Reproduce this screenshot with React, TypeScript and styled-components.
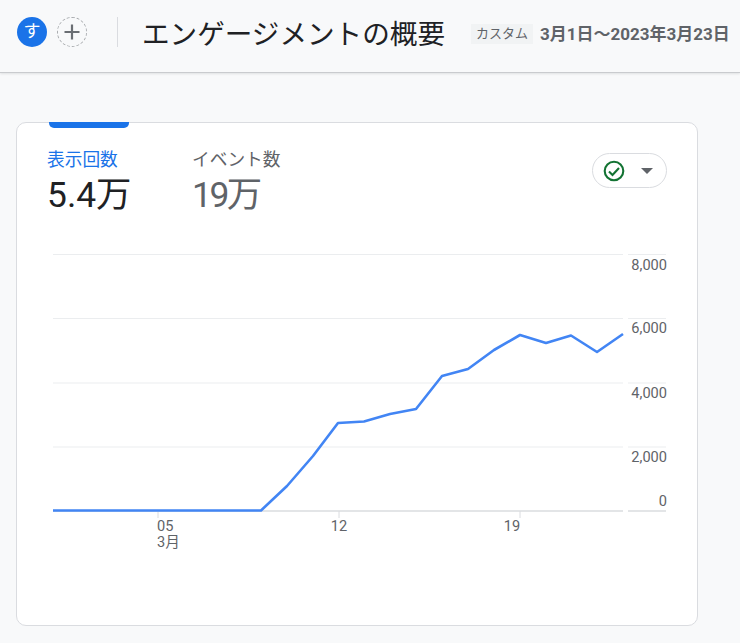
import styled, { createGlobalStyle } from "styled-components";

const FONT = `Roboto, "Noto Sans CJK JP", sans-serif`;

const Global = createGlobalStyle`
  html, body { margin: 0; padding: 0; background: #f8f9fa; overflow: hidden; }
  body { font-family: ${FONT}; }
`;

const Page = styled.div`
  width: 740px;
  height: 643px;
  overflow: hidden;
  background: #f8f9fa;
`;

const Header = styled.header`
  box-sizing: border-box;
  height: 73px;
  display: flex;
  align-items: center;
  padding: 0 0 8px 17px;
  border-bottom: 1px solid #c9cbce;
  box-shadow: 0 1px 2px rgba(60, 64, 67, 0.12);
  white-space: nowrap;
`;

const Avatar = styled.div`
  width: 30px;
  height: 30px;
  border-radius: 50%;
  background: #1a73e8;
  color: #fff;
  font-size: 17px;
  line-height: 28px;
  text-align: center;
`;

const AddButton = styled.div`
  box-sizing: border-box;
  width: 30px;
  height: 30px;
  margin-left: 10px;
  border-radius: 50%;
  border: 1px dashed #a8abae;
  display: flex;
  align-items: center;
  justify-content: center;
`;

const Divider = styled.div`
  width: 1px;
  height: 30px;
  margin: 0 24px 0 30px;
  background: #dadce0;
`;

const Title = styled.h1`
  margin: 0;
  font-size: 27.6px;
  font-weight: 400;
  color: #202124;
`;

const Chip = styled.span`
  margin: 3px 0 0 26px;
  padding: 0 5px;
  height: 20px;
  line-height: 20px;
  font-size: 13px;
  background: #f1f3f4;
  color: #5f6368;
`;

const DateRange = styled.span`
  margin: 1px 0 0 7px;
  font-size: 17px;
  font-weight: 700;
  color: #5f6368;
`;

const Card = styled.section`
  box-sizing: border-box;
  position: relative;
  width: 682px;
  height: 504px;
  margin: 49px 0 0 16px;
  background: #fff;
  border: 1px solid #dadce0;
  border-radius: 10px;
`;

const ActiveTabBar = styled.div`
  position: absolute;
  top: -1px;
  left: 32px;
  width: 80px;
  height: 6px;
  background: #1a73e8;
  border-radius: 0 0 5px 5px;
`;

const CardTop = styled.div`
  display: flex;
  align-items: flex-start;
  padding: 24px 30px 0 30px;
`;

const Metric = styled.div`
  width: 145px;
`;

const MetricLabel = styled.div<{ $active?: boolean }>`
  font-size: 17.7px;
  line-height: 26px;
  color: ${({ $active }) => ($active ? "#1a73e8" : "#5f6368")};
`;

const MetricValue = styled.div<{ $active?: boolean }>`
  font-size: 35.4px;
  line-height: 44px;
  letter-spacing: ${({ $active }) => ($active ? "0" : "-2.5px")};
  color: ${({ $active }) => ($active ? "#202124" : "#5f6368")};
`;

const CompareButton = styled.div`
  box-sizing: border-box;
  width: 75px;
  height: 35px;
  margin: 6px 0 0 auto;
  display: flex;
  align-items: center;
  padding-left: 10px;
  gap: 16px;
  border: 1px solid #dadce0;
  border-radius: 18px;
`;

const Caret = styled.div`
  width: 0;
  height: 0;
  border-left: 6px solid transparent;
  border-right: 6px solid transparent;
  border-top: 6px solid #5f6368;
`;

const Chart = styled.svg`
  display: block;
  margin-top: 23px;
  font-family: ${FONT};
  font-size: 14.6px;
  fill: #5f6368;
`;

// chart svg starts at page (17, 240)
const OX = 17;
const OY = 240;
const series: [number, number][] = [
  [53, 510.5], [261, 510.5], [287, 486], [313, 456], [338, 423], [364, 421.5],
  [390, 414], [416, 409], [442, 376], [468, 369], [494, 350], [520, 335],
  [546, 343], [571, 335.5], [597, 352], [623, 334],
];
const linePoints = series.map(([x, y]) => `${x - OX},${y - OY}`).join(" ");
const gridLines = [254.5, 318.5, 383, 447];
const yLabels: [string, number][] = [["8,000", 270], ["6,000", 333], ["4,000", 398], ["2,000", 462], ["0", 506]];
const ticks = [158, 339, 520];

export default function App() {
  return (
    <Page>
      <Global />
      <Header>
        <Avatar>す</Avatar>
        <AddButton>
          <svg width="18" height="18" viewBox="0 0 18 18">
            <path d="M9 1.5v15M1.5 9h15" stroke="#6a6e73" strokeWidth="2.2" fill="none" />
          </svg>
        </AddButton>
        <Divider />
        <Title>エンゲージメントの概要</Title>
        <Chip>カスタム</Chip>
        <DateRange>3月1日～2023年3月23日</DateRange>
      </Header>
      <Card>
        <ActiveTabBar />
        <CardTop>
          <Metric>
            <MetricLabel $active>表示回数</MetricLabel>
            <MetricValue $active>5.4万</MetricValue>
          </Metric>
          <Metric>
            <MetricLabel>イベント数</MetricLabel>
            <MetricValue>19万</MetricValue>
          </Metric>
          <CompareButton>
            <svg width="22" height="22" viewBox="0 0 22 22" fill="none">
              <circle cx="11" cy="11" r="9.3" stroke="#137333" strokeWidth="2.1" />
              <path d="M6 11.5l3.5 3.5 6.5-7" stroke="#137333" strokeWidth="2.1" />
            </svg>
            <Caret />
          </CompareButton>
        </CardTop>
        <Chart width="664" height="320" viewBox="0 0 664 320">
          {gridLines.map((y) => (
            <g key={y} stroke="#ebedef" strokeWidth="1">
              <line x1={53 - OX} x2={623 - OX} y1={y - OY} y2={y - OY} />
              <line x1={628 - OX} x2={666 - OX} y1={y - OY} y2={y - OY} />
            </g>
          ))}
          <g stroke="#e3e5e7" strokeWidth="2">
            <line x1={53 - OX} x2={623 - OX} y1={511 - OY} y2={511 - OY} />
            <line x1={628 - OX} x2={666 - OX} y1={511 - OY} y2={511 - OY} />
          </g>
          {ticks.map((x) => (
            <line key={x} x1={x - OX} x2={x - OX} y1={511 - OY} y2={518 - OY} stroke="#dadce0" strokeWidth="1" />
          ))}
          <polyline points={linePoints} fill="none" stroke="#4285f4" strokeWidth="2.6" strokeLinejoin="round" />
          {yLabels.map(([label, y]) => (
            <text key={label} x={667 - OX} y={y - OY} textAnchor="end">{label}</text>
          ))}
          <text x={157 - OX} y={530.5 - OY}>05</text>
          <text x={157 - OX} y={546.5 - OY}>3月</text>
          <text x={339 - OX} y={530.5 - OY} textAnchor="middle">12</text>
          <text x={512 - OX} y={530.5 - OY} textAnchor="middle">19</text>
        </Chart>
      </Card>
    </Page>
  );
}
